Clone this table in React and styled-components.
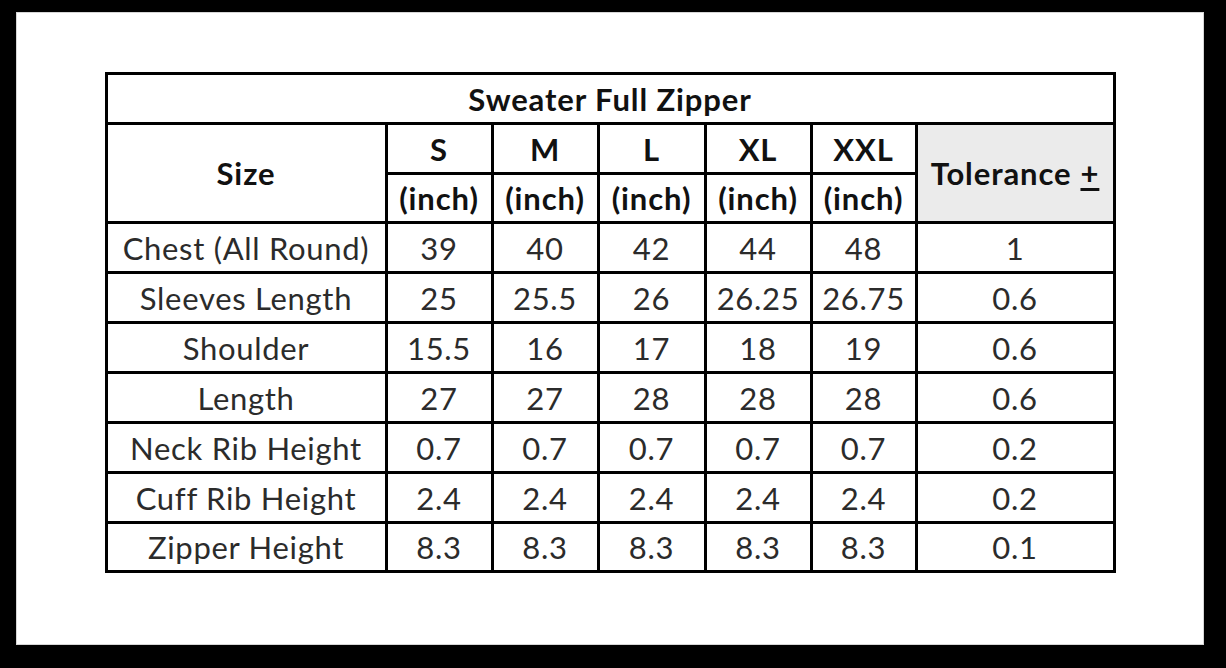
import React from "react";
import styled, { createGlobalStyle } from "styled-components";

const GlobalStyle = createGlobalStyle`
    html, body {
        margin: 0;
        padding: 0;
        background: #000;
    }
    body {
        width: 1226px;
        height: 668px;
        overflow: hidden;
        font-family: Lato, "Liberation Sans", sans-serif;
    }
`;

const Frame = styled.div`
    width: 1226px;
    height: 668px;
    padding: 12px 22px 23px 16px;
    box-sizing: border-box;
`;

const Sheet = styled.div`
    height: 100%;
    background: #fff;
    box-shadow: inset 0 0 0 1px #d6d6d6;
    display: flex;
    justify-content: center;
    align-items: flex-start;
    padding-top: 60px;
    box-sizing: border-box;
`;

const Grid = styled.div`
    display: grid;
    grid-template-columns: 277px 103px 103px 104px 103px 102px 195px;
    grid-template-rows: 47px 47px 46px repeat(6, 47px) 46px;
    gap: 3px;
    padding: 3px;
    background: #000;
`;

const Cell = styled.div`
    background: ${(p) => (p.$shade ? "#ebebeb" : "#fff")};
    display: flex;
    align-items: center;
    justify-content: center;
    font-size: 31px;
    font-weight: ${(p) => (p.$bold ? 700 : 400)};
    color: ${(p) => (p.$bold ? "#111" : "#2b2b2b")};
    white-space: nowrap;
    letter-spacing: ${(p) => (p.$bold ? "0.9px" : "0.7px")};
    grid-column: ${(p) => p.$col || "auto"};
    grid-row: ${(p) => p.$row || "auto"};
`;

const Plus = styled.span`
    text-decoration: underline;
    text-underline-offset: 3px;
    margin-left: 9px;
`;

const sizes = ["S", "M", "L", "XL", "XXL"];

const rows = [
    ["Chest (All Round)", "39", "40", "42", "44", "48", "1"],
    ["Sleeves Length", "25", "25.5", "26", "26.25", "26.75", "0.6"],
    ["Shoulder", "15.5", "16", "17", "18", "19", "0.6"],
    ["Length", "27", "27", "28", "28", "28", "0.6"],
    ["Neck Rib Height", "0.7", "0.7", "0.7", "0.7", "0.7", "0.2"],
    ["Cuff Rib Height", "2.4", "2.4", "2.4", "2.4", "2.4", "0.2"],
    ["Zipper Height", "8.3", "8.3", "8.3", "8.3", "8.3", "0.1"],
];

export default function App() {
    return (
        <Frame>
            <GlobalStyle />
            <Sheet>
                <Grid>
                    <Cell $bold $col="1 / 8">
                        Sweater Full Zipper
                    </Cell>
                    <Cell $bold $col="1" $row="2 / 4">
                        Size
                    </Cell>
                    {sizes.map((s, i) => (
                        <Cell key={s} $bold $col={`${i + 2}`} $row="2">
                            {s}
                        </Cell>
                    ))}
                    <Cell $bold $shade $col="7" $row="2 / 4">
                        Tolerance<Plus>+</Plus>
                    </Cell>
                    {sizes.map((s, i) => (
                        <Cell key={s + "u"} $bold $col={`${i + 2}`} $row="3">
                            (inch)
                        </Cell>
                    ))}
                    {rows.map((r) =>
                        r.map((v, j) => <Cell key={r[0] + j}>{v}</Cell>)
                    )}
                </Grid>
            </Sheet>
        </Frame>
    );
}
